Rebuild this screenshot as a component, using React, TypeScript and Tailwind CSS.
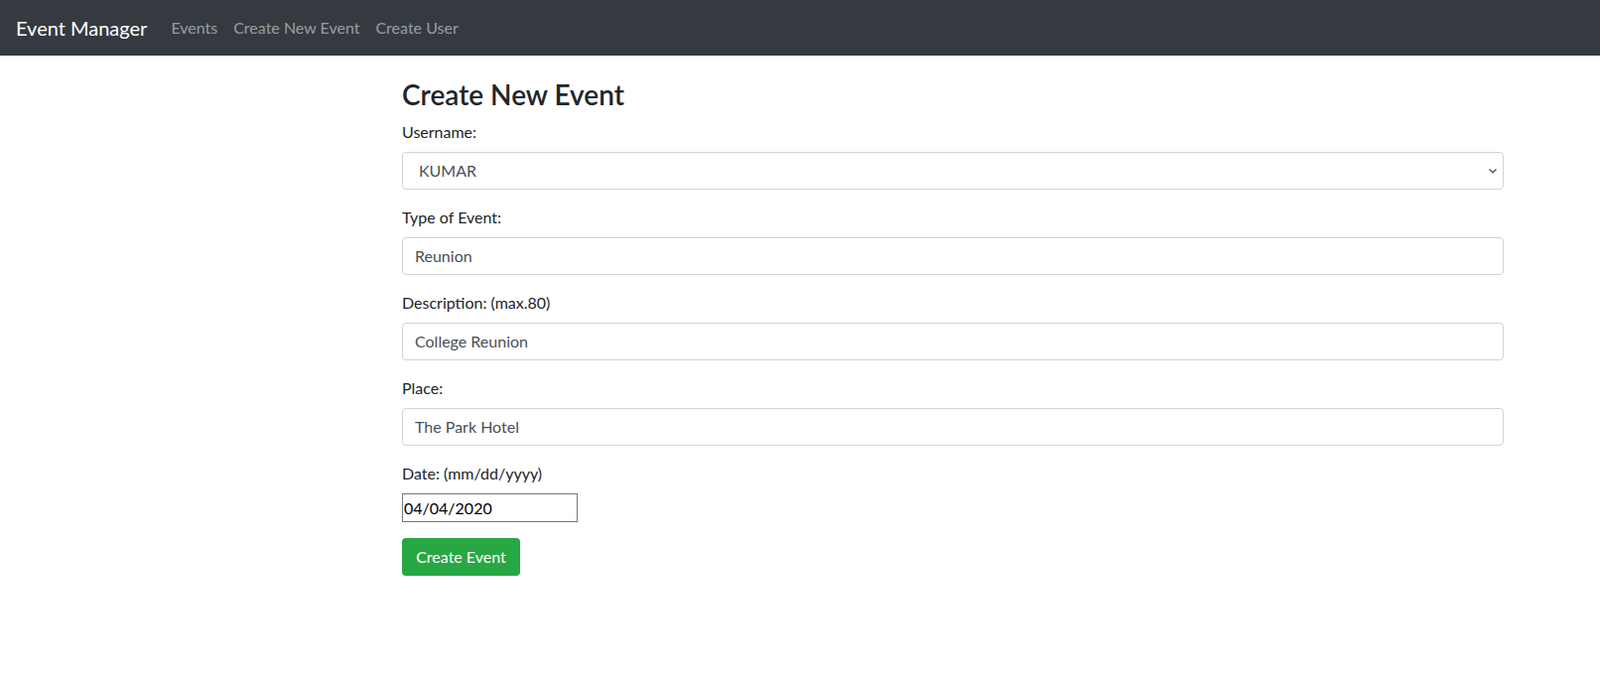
import React from "react";

export default function App() {
  return (
    <div className="min-h-[687px] bg-white font-['Lato',sans-serif] text-[16px] leading-[24px] text-[#212529]">
      <nav className="flex h-[56px] items-center bg-[#343a40] px-[16px]">
        <span className="mr-[16px] py-[5px] text-[20px] leading-[30px] text-white">Event Manager</span>
        <div className="flex">
          <a className="px-[8px] text-white/50">Events</a>
          <a className="px-[8px] text-white/50">Create New Event</a>
          <a className="px-[8px] text-white/50">Create User</a>
        </div>
      </nav>
      <main className="ml-[405px] w-[1110px] pt-[23px]">
        <h3 className="mb-[8px] text-[28px] font-semibold leading-[33.6px]">Create New Event</h3>
        <form>
          <div className="mb-[16px]">
            <label className="mb-[8px] block">Username:</label>
            <div className="relative">
              <select
                defaultValue="KUMAR"
                className="block h-[38px] w-full appearance-none rounded-[4px] border border-[#ced4da] bg-white pl-[16px] pr-[28px] text-[#495057] outline-none"
              >
                <option>KUMAR</option>
              </select>
              <svg
                className="pointer-events-none absolute right-[6px] top-[15px]"
                width="10"
                height="8"
                viewBox="0 0 10 8"
              >
                <path d="M1.5 2.5 L5 5.8 L8.5 2.5" fill="none" stroke="#555" strokeWidth="1.4" />
              </svg>
            </div>
          </div>
          <div className="mb-[16px]">
            <label className="mb-[8px] block">Type of Event:</label>
            <input
              defaultValue="Reunion"
              className="block h-[38px] w-full rounded-[4px] border border-[#ced4da] px-[12px] text-[#495057] outline-none"
            />
          </div>
          <div className="mb-[16px]">
            <label className="mb-[8px] block">Description: (max.80)</label>
            <input
              defaultValue="College Reunion"
              className="block h-[38px] w-full rounded-[4px] border border-[#ced4da] px-[12px] text-[#495057] outline-none"
            />
          </div>
          <div className="mb-[16px]">
            <label className="mb-[8px] block">Place:</label>
            <input
              defaultValue="The Park Hotel"
              className="block h-[38px] w-full rounded-[4px] border border-[#ced4da] px-[12px] text-[#495057] outline-none"
            />
          </div>
          <div className="mb-[16px]">
            <label className="mb-[8px] block">Date: (mm/dd/yyyy)</label>
            <input
              defaultValue="04/04/2020"
              className="block h-[29px] w-[177px] border border-[#767676] px-[1px] text-black outline-none"
            />
          </div>
          <button
            type="button"
            className="h-[38px] w-[119px] rounded-[4px] bg-[#28a745] text-white"
          >
            Create Event
          </button>
        </form>
      </main>
    </div>
  );
}
